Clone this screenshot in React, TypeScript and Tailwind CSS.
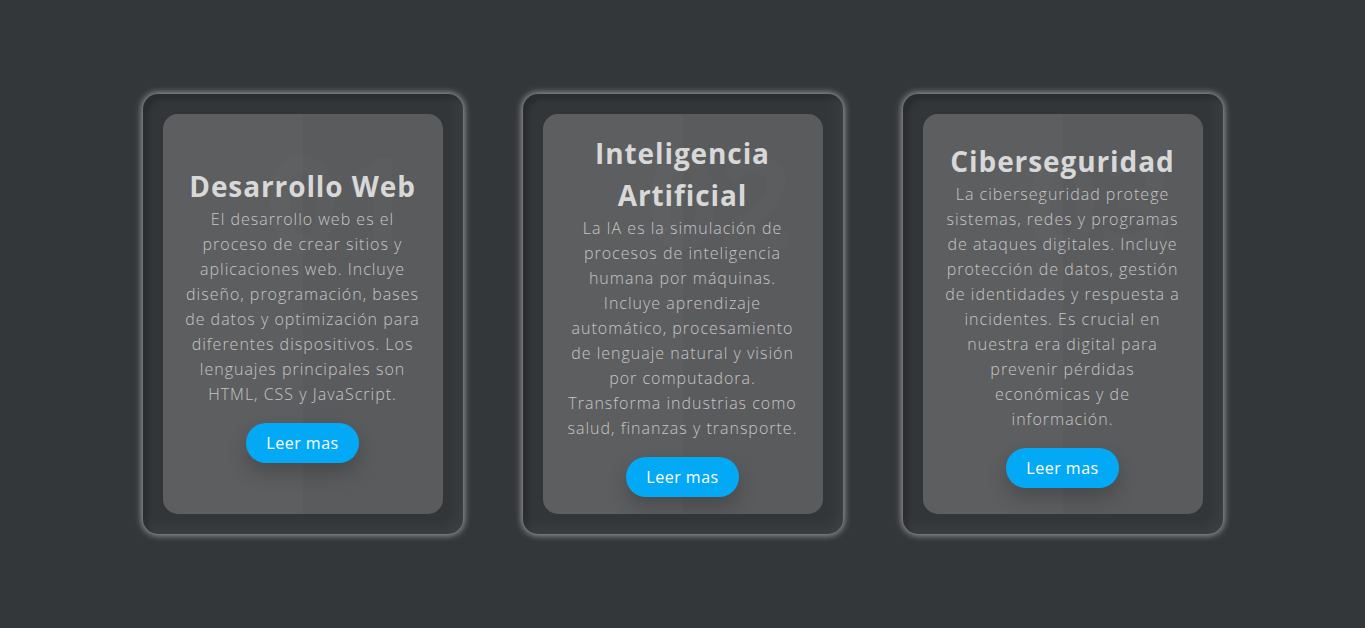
const cards = [
  {
    num: '01',
    title: 'Desarrollo Web',
    text: 'El desarrollo web es el proceso de crear sitios y aplicaciones web. Incluye diseño, programación, bases de datos y optimización para diferentes dispositivos. Los lenguajes principales son HTML, CSS y JavaScript.',
  },
  {
    num: '02',
    title: 'Inteligencia Artificial',
    text: 'La IA es la simulación de procesos de inteligencia humana por máquinas. Incluye aprendizaje automático, procesamiento de lenguaje natural y visión por computadora. Transforma industrias como salud, finanzas y transporte.',
  },
  {
    num: '03',
    title: 'Ciberseguridad',
    text: 'La ciberseguridad protege sistemas, redes y programas de ataques digitales. Incluye protección de datos, gestión de identidades y respuesta a incidentes. Es crucial en nuestra era digital para prevenir pérdidas económicas y de información.',
  },
];

export default function App() {
  return (
    <div className="min-h-screen bg-[#34373a] flex items-center justify-center gap-[60px] font-['Open_Sans',sans-serif]">
      {cards.map((card) => (
        <div
          key={card.num}
          className="w-[320px] h-[440px] p-5 rounded-[15px] bg-[#333639] shadow-[0_0_7px_1px_rgba(255,255,255,0.55),inset_5px_5px_5px_rgba(0,0,0,0.2),inset_-5px_-5px_15px_rgba(255,255,255,0.05)]"
        >
          <div className="relative h-full overflow-hidden rounded-[15px] bg-[linear-gradient(90deg,#5d5e60_50%,#5a5b5d_50%)] flex items-center justify-center px-5">
            {/* faint number */}
            <span className="absolute -top-[10px] right-[30px] text-[128px] font-bold leading-[1.5] text-white/[0.015] pointer-events-none">
              {card.num}
            </span>
            <div className="relative z-10 text-center">
              <h3 className="text-[28px] leading-[42px] font-bold tracking-[0.9px] text-[#d8d8d8]">{card.title}</h3>
              <p className="text-[16px] leading-[25px] font-light tracking-[1px] text-[#c6c6c6]">{card.text}</p>
              <a
                href="#"
                className="inline-block mt-4 px-5 py-2 leading-6 rounded-full bg-[#03a9f4] text-white text-[16px] tracking-[0.5px] shadow-[0_10px_20px_rgba(0,0,0,0.2)]"
              >
                Leer mas
              </a>
            </div>
          </div>
        </div>
      ))}
    </div>
  );
}
